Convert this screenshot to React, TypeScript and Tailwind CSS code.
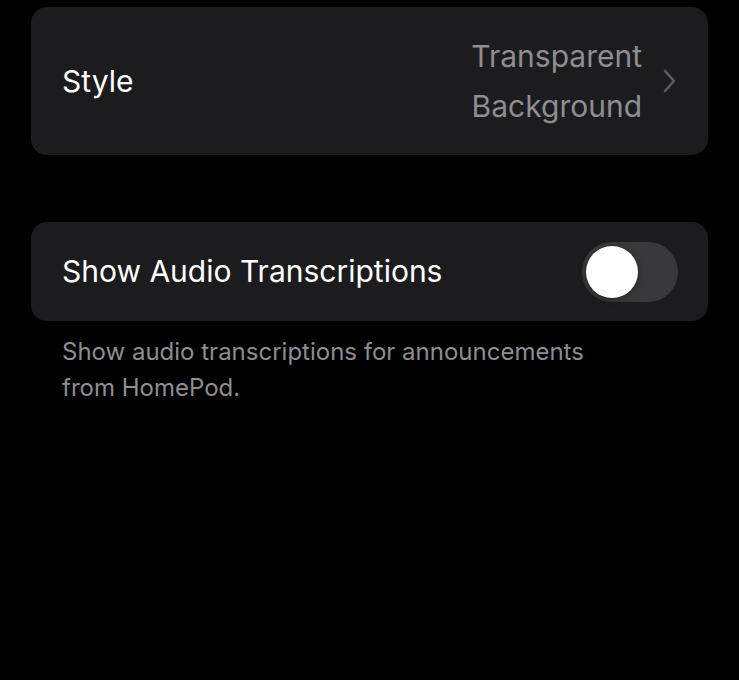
const Chevron = () => (
  <svg width="13" height="24" viewBox="0 0 13 24" fill="none" className="shrink-0">
    <path d="M2 2 L11 12 L2 22" stroke="#5b5b60" strokeWidth="2.6" strokeLinecap="round" strokeLinejoin="round" />
  </svg>
);

const Toggle = () => (
  <div className="w-[96px] h-[60px] rounded-full bg-[#39393d] p-[4px] flex items-center shrink-0">
    <div className="w-[52px] h-[52px] rounded-full bg-white shadow-[0_2px_6px_rgba(0,0,0,0.35)]" />
  </div>
);

export default function App() {
  return (
    <div className="min-h-[680px] bg-black px-[31px] pt-[7px] font-['Inter','Liberation_Sans',sans-serif] antialiased">
      {/* Style row */}
      <div className="h-[148px] rounded-[16px] bg-[#1c1c1e] pl-[31px] pr-[32px] flex items-center justify-between">
        <span className="text-white text-[30px]">Style</span>
        <div className="flex items-center">
          <div className="text-right text-[#8e8e93] text-[30px] leading-[50px]">
            <div>Transparent</div>
            <div>Background</div>
          </div>
          <div className="ml-[21px]">
            <Chevron />
          </div>
        </div>
      </div>

      {/* Audio transcriptions */}
      <div className="mt-[67px] h-[99px] rounded-[16px] bg-[#1c1c1e] pl-[31px] pr-[30px] flex items-center justify-between">
        <span className="text-white text-[30px]">Show Audio Transcriptions</span>
        <Toggle />
      </div>
      <p className="mt-[13px] pl-[31px] text-[#8d8d92] text-[24px] leading-[36px] max-w-[640px]">
        Show audio transcriptions for announcements
        <br />
        from HomePod.
      </p>
    </div>
  );
}
